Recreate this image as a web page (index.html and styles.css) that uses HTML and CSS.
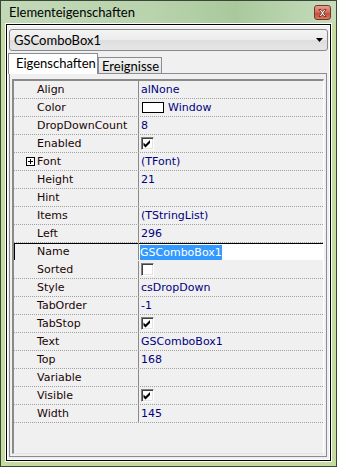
FILE: index.html
```html
<!DOCTYPE html>
<html lang="de">
<head>
  <meta charset="UTF-8">
  <title>Elementeigenschaften</title>
  <link rel="stylesheet" href="styles.css">
</head>
<body>
  <div class="window">
    <div class="titlebar">
      <span class="title">Elementeigenschaften</span>
      <span class="close">
        <svg width="9" height="8" viewBox="0 0 9 8"><path d="M1 0.5h2l1.5 2 1.5-2h2l-2.5 3.5 2.5 3.5h-2l-1.5-2-1.5 2h-2l2.5-3.5z" fill="#fff" stroke="#6b1d12" stroke-width="0.8"/></svg>
      </span>
    </div>
    <div class="client">
      <div class="combo">
        <span>GSComboBox1</span>
        <svg class="arrow" width="7" height="4" viewBox="0 0 7 4"><polygon points="0,0 7,0 3.5,4" fill="#000"/></svg>
      </div>
      <div class="tabs">
        <div class="tab active">Eigenschaften</div>
        <div class="tab">Ereignisse</div>
      </div>
      <div class="page">
        <div class="grid">
          <div class="row"><div class="name">Align</div><div class="value">alNone</div></div>
          <div class="row"><div class="name">Color</div><div class="value"><span class="swatch"></span>Window</div></div>
          <div class="row"><div class="name">DropDownCount</div><div class="value">8</div></div>
          <div class="row"><div class="name">Enabled</div><div class="value"><span class="cb"><svg width="11" height="11" viewBox="0 0 11 11"><path d="M1.5 4.5l2 2 4.5-4.5v3l-4.5 4.5-2-2z" fill="#000"/></svg></span></div></div>
          <div class="row"><div class="name"><span class="plus"></span>Font</div><div class="value">(TFont)</div></div>
          <div class="row"><div class="name">Height</div><div class="value">21</div></div>
          <div class="row"><div class="name">Hint</div><div class="value"></div></div>
          <div class="row"><div class="name">Items</div><div class="value">(TStringList)</div></div>
          <div class="row"><div class="name">Left</div><div class="value">296</div></div>
          <div class="row sel"><div class="name">Name</div><div class="value"><span class="hl">GSComboBox1</span></div></div>
          <div class="row"><div class="name">Sorted</div><div class="value"><span class="cb"></span></div></div>
          <div class="row"><div class="name">Style</div><div class="value">csDropDown</div></div>
          <div class="row"><div class="name">TabOrder</div><div class="value">-1</div></div>
          <div class="row"><div class="name">TabStop</div><div class="value"><span class="cb"><svg width="11" height="11" viewBox="0 0 11 11"><path d="M1.5 4.5l2 2 4.5-4.5v3l-4.5 4.5-2-2z" fill="#000"/></svg></span></div></div>
          <div class="row"><div class="name">Text</div><div class="value">GSComboBox1</div></div>
          <div class="row"><div class="name">Top</div><div class="value">168</div></div>
          <div class="row"><div class="name">Variable</div><div class="value"></div></div>
          <div class="row"><div class="name">Visible</div><div class="value"><span class="cb"><svg width="11" height="11" viewBox="0 0 11 11"><path d="M1.5 4.5l2 2 4.5-4.5v3l-4.5 4.5-2-2z" fill="#000"/></svg></span></div></div>
          <div class="row"><div class="name">Width</div><div class="value">145</div></div>
        </div>
      </div>
    </div>
  </div>
</body>
</html>
```

FILE: styles.css
```css
body {
  margin: 0;
  background: #fff;
}
.window {
  width: 337px;
  height: 467px;
  box-sizing: border-box;
  border: 1px solid #3a4636;
  background: #c4dca0;
  display: flex;
  flex-direction: column;
}
.titlebar {
  height: 22px;
  display: flex;
  align-items: flex-start;
  justify-content: space-between;
  background: linear-gradient(to right, #c2d9b8, #b9d3ad 45%, #a9c99c 70%, #c6dcbc);
}
.title {
  font-family: Lato, "Liberation Sans", sans-serif;
  font-size: 13px;
  line-height: 22px;
  padding-left: 8px;
  color: #000;
}
.close {
  width: 17px;
  height: 15px;
  box-sizing: border-box;
  margin: 4px 5px 0 0;
  border: 1px solid #6e3a30;
  border-radius: 3px;
  background: linear-gradient(#e8a090, #d26a55 50%, #c24a34 51%, #d47a60);
  display: flex;
  align-items: center;
  justify-content: center;
}
.client {
  flex: 1;
  margin: 1px 5px 5px 5px;
  border: 1px solid #000;
  box-shadow: 0 0 0 1px #fff, inset 0 0 0 1px #fff;
  background: #f0f0f0;
  display: flex;
  flex-direction: column;
}
.combo {
  height: 22px;
  box-sizing: border-box;
  margin: 4px 2px 0 2px;
  border: 1px solid #8a8a8a;
  border-radius: 3px;
  background: linear-gradient(#f4f4f4, #ebebeb 50%, #dedede 51%, #e6e6e6);
  display: flex;
  align-items: center;
  justify-content: space-between;
  padding: 0 4px 0 4px;
  font-family: Lato, "Liberation Sans", sans-serif;
  font-size: 13px;
}
.arrow {
  display: block;
}
.tabs {
  display: flex;
  align-items: flex-end;
  height: 21px;
  margin: 2px 0 -1px 1px;
  font-family: Lato, "Liberation Sans", sans-serif;
  font-size: 13px;
}
.tab {
  height: 17px;
  box-sizing: border-box;
  border: 1px solid #898c95;
  border-bottom: none;
  background: linear-gradient(#f2f2f2, #e4e4e4);
  padding: 0 2px 0 3px;
  line-height: 17px;
}
.tab.active {
  height: 21px;
  width: 90px;
  padding-left: 7px;
  background: #fff;
  line-height: 19px;
  position: relative;
  z-index: 1;
}
.page {
  flex: 1;
  margin: 0 3px 3px 2px;
  border: 1px solid #898c95;
  padding: 5px 2px 2px 2px;
  display: flex;
}
.grid {
  flex: 1;
  border-style: solid;
  border-width: 2px 1px 1px 2px;
  border-color: #8a8a8a #ffffff #e3e3e3 #8a8a8a;
  background: #f0f0f0;
  font-family: "DejaVu Sans", sans-serif;
  font-size: 11px;
}
.row {
  display: flex;
  height: 18px;
  box-sizing: border-box;
  border-bottom: 1px dotted #a0a0a0;
  line-height: 17px;
}
.name {
  width: 125px;
  box-sizing: border-box;
  border-right: 1px solid #8a8a8a;
  padding-left: 23px;
  color: #1a0505;
  white-space: nowrap;
}
.value {
  flex: 1;
  padding-left: 2px;
  color: #00007f;
  display: flex;
  align-items: center;
  white-space: nowrap;
}
.row.sel {
  box-shadow: inset 1px 1px 0 #000;
  border-bottom-color: #f0f0f0;
}
.row.sel .value {
  background: #fff;
  margin-top: 1px;
  align-items: flex-end;
  padding-left: 1px;
}
.hl {
  background: #3399ff;
  color: #fff;
  line-height: 15px;
}
.plus {
  display: inline-block;
  width: 9px;
  height: 9px;
  box-sizing: border-box;
  border: 1px solid #000;
  margin-left: -11px;
  margin-right: 2px;
  vertical-align: -1px;
  background:
    linear-gradient(#000, #000) center / 5px 1px no-repeat,
    linear-gradient(#000, #000) center / 1px 5px no-repeat,
    #fff;
}
.swatch {
  width: 22px;
  height: 11px;
  box-sizing: border-box;
  border: 1px solid #000;
  background: #fff;
  margin: 0 4px 0 1px;
}
.cb {
  width: 13px;
  height: 13px;
  box-sizing: border-box;
  border-style: solid;
  border-width: 1px;
  border-color: #808080 #fff #fff #808080;
  box-shadow: inset 1px 1px 0 #404040, inset -1px -1px 0 #e3e3e3;
  background: #fff;
  display: flex;
  align-items: center;
  justify-content: center;
}
.cb svg {
  display: block;
}
```
